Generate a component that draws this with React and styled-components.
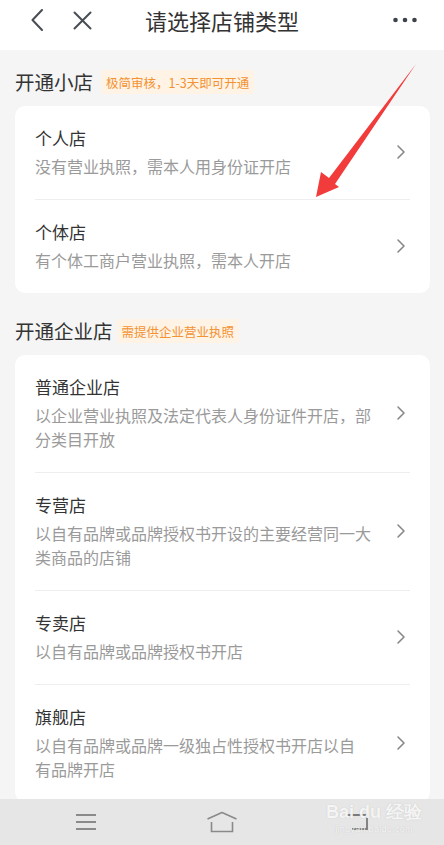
import styled, { createGlobalStyle } from "styled-components";

const GlobalStyle = createGlobalStyle`
  html, body {
    margin: 0;
    padding: 0;
    background: #f5f5f5;
  }
  body {
    font-family: "Noto Sans CJK SC", "Noto Sans", sans-serif;
    color: #333;
  }
`;

const Page = styled.div`
  position: relative;
  width: 444px;
  height: 845px;
  display: flex;
  flex-direction: column;
  overflow: hidden;
  background: #f5f5f5;
`;

const Header = styled.header`
  height: 50px;
  flex-shrink: 0;
  background: #fff;
  display: grid;
  grid-template-columns: 100px 1fr 100px;
  align-items: center;
  padding-bottom: 10px;
  box-sizing: border-box;
`;

const HeaderLeft = styled.div`
  display: flex;
  align-items: center;
  gap: 30px;
  padding-left: 31px;
`;

const HeaderRight = styled.div`
  display: flex;
  justify-content: flex-end;
  padding-right: 27px;
`;

const Title = styled.h1`
  margin: 0;
  text-align: center;
  font-size: 22px;
  line-height: 30px;
  font-weight: 400;
  color: #333;
`;

const Content = styled.main`
  flex: 1;
  overflow: hidden;
  padding: 20px 14px 0 15px;
`;

const Section = styled.section`
  & + & {
    margin-top: 26px;
  }
`;

const SectionHead = styled.div`
  display: flex;
  align-items: center;
  height: 24px;
  margin-bottom: 12px;
`;

const SectionTitle = styled.h2`
  margin: 0;
  font-size: 19.5px;
  font-weight: 400;
  line-height: 24px;
  color: #333;
`;

const Badge = styled.span`
  margin-left: ${(p) => p.$gap || 6}px;
  height: 24px;
  display: inline-flex;
  align-items: center;
  padding: 0 5px;
  border-radius: 3px;
  background: #fff3e5;
  color: #f29233;
  font-size: 12.5px;
`;

const Card = styled.div`
  background: #fff;
  border-radius: 10px;
`;

const Row = styled.div`
  margin: 0 20px;
  padding: 20px 4px 21px 0;
  display: flex;
  align-items: center;
  gap: 16px;

  &:not(:last-child) {
    border-bottom: 1px solid #eeeeee;
  }
`;

const RowText = styled.div`
  flex: 1;
  min-width: 0;
`;

const RowTitle = styled.div`
  font-size: 17px;
  line-height: 24px;
  color: #333;
`;

const RowDesc = styled.div`
  margin-top: 4px;
  font-size: 16px;
  line-height: 24px;
  color: #9a9a9a;
  white-space: pre-line;
`;

const NavBar = styled.nav`
  height: 46px;
  flex-shrink: 0;
  background: #e6e6e6;
  padding: 0 18px;
  display: grid;
  grid-template-columns: repeat(3, 1fr);
  align-items: center;
  justify-items: center;
`;

const Arrow = styled.svg`
  position: absolute;
  left: 0;
  top: 0;
  pointer-events: none;
`;

const Watermark = styled.div`
  position: absolute;
  right: 22px;
  bottom: 10px;
  display: flex;
  flex-direction: column;
  align-items: center;
  font-family: "Liberation Sans", sans-serif;
  color: rgba(255, 255, 255, 0.85);
  text-shadow: 0 0 1px rgba(160, 160, 160, 0.6);
  pointer-events: none;
`;

const MarkMain = styled.span`
  font-size: 18px;
  font-weight: 700;
  line-height: 22px;
`;

const MarkSub = styled.span`
  font-size: 9px;
  line-height: 12px;
  letter-spacing: 0.3px;
`;

const Chevron = () => (
  <svg width="10" height="16" viewBox="0 0 10 16">
    <path d="M2 2 L8 8 L2 14" fill="none" stroke="#888" strokeWidth="1.6" strokeLinecap="round" strokeLinejoin="round" />
  </svg>
);

const BackIcon = () => (
  <svg width="12" height="22" viewBox="0 0 12 22">
    <path d="M11 1 L1.5 11 L11 21" fill="none" stroke="#484d55" strokeWidth="2" strokeLinecap="round" strokeLinejoin="round" />
  </svg>
);

const CloseIcon = () => (
  <svg width="19" height="19" viewBox="0 0 19 19">
    <path d="M1.5 1.5 L17.5 17.5 M17.5 1.5 L1.5 17.5" fill="none" stroke="#484d55" strokeWidth="2" strokeLinecap="round" />
  </svg>
);

const MoreIcon = () => (
  <svg width="24" height="6" viewBox="0 0 24 6">
    <circle cx="2.5" cy="3" r="2.3" fill="#3e434b" />
    <circle cx="12" cy="3" r="2.3" fill="#3e434b" />
    <circle cx="21.5" cy="3" r="2.3" fill="#3e434b" />
  </svg>
);

const MenuIcon = () => (
  <svg width="22" height="18" viewBox="0 0 22 18">
    <path d="M1 2 H21 M1 9 H21 M1 16 H21" stroke="#8a8a8a" strokeWidth="1.8" />
  </svg>
);

const HomeIcon = () => (
  <svg width="32" height="22" viewBox="0 0 32 22">
    <path d="M1.5 8 L16 1.5 L30.5 8" fill="none" stroke="#8a8a8a" strokeWidth="1.6" strokeLinejoin="round" />
    <path d="M5.5 11 V20.5 H26.5 V11" fill="none" stroke="#8a8a8a" strokeWidth="1.6" />
  </svg>
);

const RecentIcon = () => (
  <svg width="24" height="18" viewBox="0 0 24 18">
    <path d="M1 2 H21 V16 H6" fill="none" stroke="#7a7a7a" strokeWidth="1.8" />
  </svg>
);

const small = [
  { title: "个人店", desc: "没有营业执照，需本人用身份证开店" },
  { title: "个体店", desc: "有个体工商户营业执照，需本人开店" },
];

const corp = [
  { title: "普通企业店", desc: "以企业营业执照及法定代表人身份证件开店，部分类目开放" },
  { title: "专营店", desc: "以自有品牌或品牌授权书开设的主要经营同一大类商品的店铺" },
  { title: "专卖店", desc: "以自有品牌或品牌授权书开店" },
  { title: "旗舰店", desc: "以自有品牌或品牌一级独占性授权书开店以自\n有品牌开店" },
];

function ShopRow({ item }) {
  return (
    <Row>
      <RowText>
        <RowTitle>{item.title}</RowTitle>
        <RowDesc>{item.desc}</RowDesc>
      </RowText>
      <Chevron />
    </Row>
  );
}

export default function App() {
  return (
    <>
      <GlobalStyle />
      <Page>
        <Header>
          <HeaderLeft>
            <BackIcon />
            <CloseIcon />
          </HeaderLeft>
          <Title>请选择店铺类型</Title>
          <HeaderRight>
            <MoreIcon />
          </HeaderRight>
        </Header>

        <Content>
          <Section>
            <SectionHead>
              <SectionTitle>开通小店</SectionTitle>
              <Badge $gap={8}>极简审核，1-3天即可开通</Badge>
            </SectionHead>
            <Card>
              {small.map((item) => (
                <ShopRow key={item.title} item={item} />
              ))}
            </Card>
          </Section>

          <Section>
            <SectionHead>
              <SectionTitle>开通企业店</SectionTitle>
              <Badge $gap={4}>需提供企业营业执照</Badge>
            </SectionHead>
            <Card>
              {corp.map((item) => (
                <ShopRow key={item.title} item={item} />
              ))}
            </Card>
          </Section>
        </Content>

        <NavBar>
          <MenuIcon />
          <HomeIcon />
          <RecentIcon />
        </NavBar>

        {/* red annotation arrow */}
        <Arrow width="444" height="845" viewBox="0 0 444 845">
          <polygon
            points="316,197 321,172 329,178 416,64 335,184 339,187"
            fill="#f23b3b"
          />
        </Arrow>

        <Watermark>
          <MarkMain>Bai du 经验</MarkMain>
          <MarkSub>jingyan.baidu.com</MarkSub>
        </Watermark>
      </Page>
    </>
  );
}
